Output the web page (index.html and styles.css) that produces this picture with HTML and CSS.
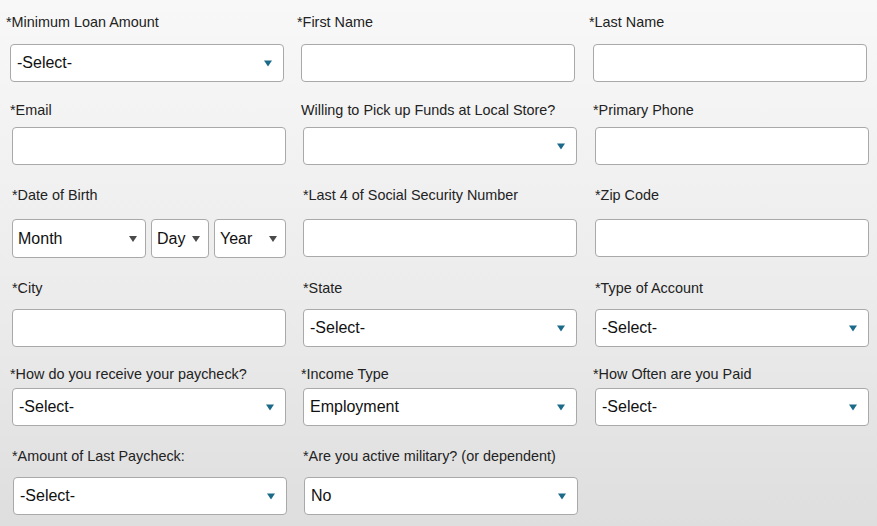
FILE: index.html
```html
<!DOCTYPE html>
<html>
<head>
<meta charset="utf-8">
<link rel="stylesheet" href="styles.css">
</head>
<body>
<div class="form">
  <div class="row r1">
    <div class="field"><div class="label">*Minimum Loan Amount</div><div class="box sel"><span>-Select-</span><svg class="arr" viewBox="0 0 8 6"><path d="M0 0H8L4 6Z"/></svg></div></div>
    <div class="field"><div class="label">*First Name</div><div class="box"></div></div>
    <div class="field"><div class="label">*Last Name</div><div class="box"></div></div>
  </div>
  <div class="row r2">
    <div class="field"><div class="label">*Email</div><div class="box"></div></div>
    <div class="field"><div class="label">Willing to Pick up Funds at Local Store?</div><div class="box sel"><span></span><svg class="arr" viewBox="0 0 8 6"><path d="M0 0H8L4 6Z"/></svg></div></div>
    <div class="field"><div class="label">*Primary Phone</div><div class="box"></div></div>
  </div>
  <div class="row r3">
    <div class="field"><div class="label">*Date of Birth</div>
      <div class="dob">
        <div class="box sel small month"><span>Month</span><svg class="arr g" viewBox="0 0 8 6"><path d="M0 0H8L4 6Z"/></svg></div>
        <div class="box sel small day"><span>Day</span><svg class="arr g" viewBox="0 0 8 6"><path d="M0 0H8L4 6Z"/></svg></div>
        <div class="box sel small year"><span>Year</span><svg class="arr g" viewBox="0 0 8 6"><path d="M0 0H8L4 6Z"/></svg></div>
      </div>
    </div>
    <div class="field"><div class="label">*Last 4 of Social Security Number</div><div class="box"></div></div>
    <div class="field"><div class="label">*Zip Code</div><div class="box"></div></div>
  </div>
  <div class="row r4">
    <div class="field"><div class="label">*City</div><div class="box"></div></div>
    <div class="field"><div class="label">*State</div><div class="box sel"><span>-Select-</span><svg class="arr" viewBox="0 0 8 6"><path d="M0 0H8L4 6Z"/></svg></div></div>
    <div class="field"><div class="label">*Type of Account</div><div class="box sel"><span>-Select-</span><svg class="arr" viewBox="0 0 8 6"><path d="M0 0H8L4 6Z"/></svg></div></div>
  </div>
  <div class="row r5">
    <div class="field"><div class="label">*How do you receive your paycheck?</div><div class="box sel"><span>-Select-</span><svg class="arr" viewBox="0 0 8 6"><path d="M0 0H8L4 6Z"/></svg></div></div>
    <div class="field"><div class="label">*Income Type</div><div class="box sel"><span>Employment</span><svg class="arr" viewBox="0 0 8 6"><path d="M0 0H8L4 6Z"/></svg></div></div>
    <div class="field"><div class="label">*How Often are you Paid</div><div class="box sel"><span>-Select-</span><svg class="arr" viewBox="0 0 8 6"><path d="M0 0H8L4 6Z"/></svg></div></div>
  </div>
  <div class="row r6">
    <div class="field"><div class="label">*Amount of Last Paycheck:</div><div class="box sel"><span>-Select-</span><svg class="arr" viewBox="0 0 8 6"><path d="M0 0H8L4 6Z"/></svg></div></div>
    <div class="field"><div class="label">*Are you active military? (or dependent)</div><div class="box sel"><span>No</span><svg class="arr" viewBox="0 0 8 6"><path d="M0 0H8L4 6Z"/></svg></div></div>
  </div>
</div>
</body>
</html>
```

FILE: styles.css
```css
html, body {
  margin: 0;
  padding: 0;
  height: 100%;
}
body {
  background: linear-gradient(to bottom, #f8f8f8 0%, #ebebeb 60%, #dedede 100%);
  font-family: "Liberation Sans", Arial, sans-serif;
  color: #222;
  overflow: hidden;
}
.form {
  padding-top: 14px;
}
.row {
  display: grid;
  grid-template-columns: 274px 275px 274px;
  column-gap: 17px;
  --lgap: 14px;
  --lml: 0px;
}
.field {
  width: 274px;
}
.label {
  font-size: 14.4px;
  line-height: 16px;
  height: 16px;
  white-space: nowrap;
  margin-left: var(--lml);
  margin-bottom: var(--lgap);
  color: #222;
}
.box {
  box-sizing: border-box;
  height: 38px;
  background: #fff;
  border: 1px solid #a9a9a9;
  border-radius: 4px;
  display: flex;
  align-items: center;
  justify-content: space-between;
  padding: 0 10px 0 6px;
  font-size: 16px;
  color: #111;
}
.box .arr {
  width: 8px;
  height: 7px;
  fill: #1b6a8a;
  margin-right: 1px;
}
.box .arr.g {
  width: 8px;
  height: 6px;
  fill: #4a4a4a;
  margin-right: -2px;
}
.dob {
  display: flex;
  gap: 5px;
}
.dob .box {
  height: 39px;
  padding-left: 5px;
}
.month { width: 134px; }
.day { width: 58px; }
.year { width: 72px; }

.r1 { padding-left: 10px; --lml: -4px; --lgap: 14px; }
.r2 { padding-left: 12px; margin-top: 20px; --lml: -2px; --lgap: 9px; }
.r3 { padding-left: 12px; margin-top: 22px; --lml: 0px; --lgap: 16px; }
.r4 { padding-left: 12px; margin-top: 22px; --lml: 0px; --lgap: 13px; }
.r5 { padding-left: 12px; margin-top: 19px; --lml: -2px; --lgap: 6px; }
.r6 { padding-left: 13px; margin-top: 22px; --lml: -1px; --lgap: 13px; }
```
